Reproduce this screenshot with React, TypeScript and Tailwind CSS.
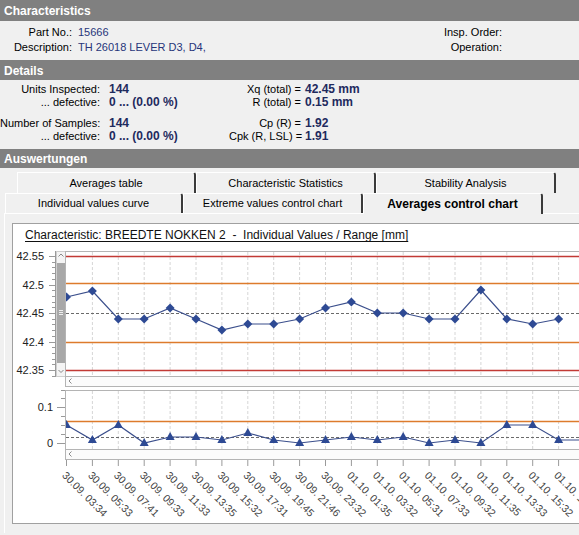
import React from 'react'

// x position of sample i in the charts (page coordinates)
const px = (i: number): number => 66.5 + 25.9 * i

// sample y positions, read straight off the plot
const indiv = [297, 291, 319, 319, 308, 319, 330, 324, 324, 319, 308, 302, 313, 313, 319, 319, 290, 319, 324, 319]
const range = [425, 440, 425, 443, 437, 437, 440, 433, 440, 443, 440, 437, 440, 437, 443, 440, 443, 425, 425, 440, 440]

const dates = [
  '30.09. 03:34',
  '30.09. 05:33',
  '30.09. 07:41',
  '30.09. 09:33',
  '30.09. 11:33',
  '30.09. 13:35',
  '30.09. 15:32',
  '30.09. 17:31',
  '30.09. 19:45',
  '30.09. 21:46',
  '30.09. 23:32',
  '01.10. 01:35',
  '01.10. 03:32',
  '01.10. 05:31',
  '01.10. 07:33',
  '01.10. 09:32',
  '01.10. 11:35',
  '01.10. 13:33',
  '01.10. 15:32',
  '01.10. 17:31',
]

const RED = '#c23a35'
const ORANGE = '#dd7b2c'
const NAVY = '#2e4a94'
const FRAME = '#b4b4b4'
const GRID = '#d6d6d6'

function SectionHeader({ title, h }: { title: string; h: string }): React.JSX.Element {
  return (
    <div className={`${h} bg-[#808080] text-white font-bold text-[12px] pl-[4px] pt-[1px] flex items-center`}>
      {title}
    </div>
  )
}

function Tab({ label, w, active }: { label: string; w: string; active?: boolean }): React.JSX.Element {
  return (
    <div
      className={`${w} shrink-0 flex items-center justify-center border-t border-l border-white border-r-2 border-r-[#3a3a3a] rounded-tr-[3px] ${
        active ? 'relative z-10 h-[21px] bg-[#f0f0f0] font-bold text-[12px]' : 'h-full'
      }`}
    >
      {label}
    </div>
  )
}

function Chart(): React.JSX.Element {
  const upTicks: number[] = []
  for (let k = -1; k <= 21; k++) upTicks.push(k)
  const lowTicks = [390, 398, 407, 416, 425, 434, 443]

  return (
    <svg width={566} height={279} viewBox="13 244 566 279" className="block">
      <defs>
        <clipPath id="up">
          <rect x={66} y={251} width={520} height={126} />
        </clipPath>
        <clipPath id="low">
          <rect x={66} y={390} width={520} height={60} />
        </clipPath>
      </defs>

      {/* ---------- individual values ---------- */}
      <g fontSize={11} fill="#222" textAnchor="end">
        {['42.55', '42.5', '42.45', '42.4', '42.35'].map((t, k) => (
          <text key={t} x={44} y={256 + k * 28.5 + 4}>
            {t}
          </text>
        ))}
      </g>
      <line x1={55.5} y1={251} x2={55.5} y2={377} stroke="#9a9a9a" />
      {upTicks.map((k) => {
        const y = Math.round(370 - k * 5.7) + 0.5
        if (y < 251 || y > 377) return null
        return <line key={k} x1={k % 5 === 0 ? 49 : 52} y1={y} x2={55} y2={y} stroke="#9a9a9a" />
      })}
      {/* vertical scroll bar */}
      <rect x={56.5} y={251.5} width={9} height={125} fill="#f4f4f4" stroke="#cfcfcf" />
      <rect x={57} y={263} width={8} height={100} fill="#a8a8a8" />
      {[310.5, 312.5, 314.5].map((y) => (
        <line key={y} x1={59} y1={y} x2={63} y2={y} stroke="#eeeeee" />
      ))}
      <path d="M58.5 256.5 L61 254 L63.5 256.5" fill="none" stroke="#8a8a8a" />
      <path d="M58.5 370 L61 372.5 L63.5 370" fill="none" stroke="#8a8a8a" />

      <rect x={65.5} y={251.5} width={520} height={125} fill="white" stroke={FRAME} />
      <rect x={65.5} y={376.5} width={520} height={10} fill="#fbfbfb" stroke={FRAME} />
      <path d="M71.5 378.5 L69 381 L71.5 383.5" fill="none" stroke="#8a8a8a" />
      {indiv.map((_, i) =>
        i === 0 ? null : (
          <line key={i} x1={px(i)} y1={252} x2={px(i)} y2={376} stroke={GRID} strokeDasharray="3 2" />
        ),
      )}
      <line x1={66} y1={256.5} x2={579} y2={256.5} stroke={RED} strokeWidth={1.3} />
      <line x1={66} y1={370.5} x2={579} y2={370.5} stroke={RED} strokeWidth={1.3} />
      <line x1={66} y1={283.5} x2={579} y2={283.5} stroke={ORANGE} strokeWidth={1.3} />
      <line x1={66} y1={342.5} x2={579} y2={342.5} stroke={ORANGE} strokeWidth={1.3} />
      <line x1={66} y1={313.5} x2={579} y2={313.5} stroke="#6a6a6a" strokeDasharray="3 2" />
      <g clipPath="url(#up)">
        <polyline points={indiv.map((y, i) => `${px(i)},${y}`).join(' ')} fill="none" stroke="#3b4f8c" strokeWidth={1.2} />
        {indiv.map((y, i) => (
          <path key={i} d={`M${px(i)} ${y - 4.5} L${px(i) + 4.5} ${y} L${px(i)} ${y + 4.5} L${px(i) - 4.5} ${y} Z`} fill={NAVY} />
        ))}
      </g>

      {/* ---------- range ---------- */}
      <g fontSize={11} fill="#222" textAnchor="end">
        <text x={53} y={411}>
          0.1
        </text>
        <text x={53} y={447}>
          0
        </text>
      </g>
      {lowTicks.map((y) => (
        <line key={y} x1={y === 407 || y === 443 ? 57 : 61} y1={y + 0.5} x2={65} y2={y + 0.5} stroke="#9a9a9a" />
      ))}
      <rect x={65.5} y={390.5} width={520} height={59} fill="white" stroke={FRAME} />
      <rect x={65.5} y={449.5} width={520} height={10} fill="#fbfbfb" stroke={FRAME} />
      <path d="M71.5 451.5 L69 454 L71.5 456.5" fill="none" stroke="#8a8a8a" />
      {range.map((_, i) =>
        i === 0 ? null : (
          <line key={i} x1={px(i)} y1={391} x2={px(i)} y2={449} stroke={GRID} strokeDasharray="3 2" />
        ),
      )}
      <line x1={66} y1={421.5} x2={579} y2={421.5} stroke={ORANGE} strokeWidth={1.3} />
      <line x1={66} y1={437.5} x2={579} y2={437.5} stroke="#6a6a6a" strokeDasharray="3 2" />
      <g clipPath="url(#low)">
        <polyline points={range.map((y, i) => `${px(i)},${y}`).join(' ')} fill="none" stroke="#3b4f8c" strokeWidth={1.2} />
        {range.map((y, i) => (
          <path key={i} d={`M${px(i)} ${y - 5} L${px(i) + 4.5} ${y + 3} L${px(i) - 4.5} ${y + 3} Z`} fill={NAVY} />
        ))}
      </g>
      {dates.map((d, i) => (
        <g key={d}>
          <line x1={px(i)} y1={460} x2={px(i)} y2={466} stroke="#9a9a9a" />
          <text x={px(i) - 5} y={476} fontSize={10.5} fill="#444" transform={`rotate(45 ${px(i) - 5} 476)`}>
            {d}
          </text>
        </g>
      ))}
    </svg>
  )
}

export default function App(): React.JSX.Element {
  return (
    <div className="w-[579px] h-[535px] overflow-hidden bg-[#f0f0f0] text-[11px] text-black font-['Liberation_Sans',Arial,sans-serif]">
      <SectionHeader title="Characteristics" h="h-[21px]" />
      <div className="h-[39px] pt-[4px] flex leading-[15px]">
        <div className="w-[72px] text-right whitespace-nowrap">
          <div>Part No.:</div>
          <div>Description:</div>
        </div>
        <div className="ml-[6px] w-[300px] text-[#27357a] whitespace-nowrap">
          <div>15666</div>
          <div>TH 26018 LEVER D3, D4,</div>
        </div>
        <div className="w-[124px] text-right whitespace-nowrap">
          <div>Insp. Order:</div>
          <div>Operation:</div>
        </div>
      </div>

      <SectionHeader title="Details" h="h-[20px]" />
      <div className="h-[69px] pt-[3px] leading-[13px]">
        {[
          [
            ['Units Inspected:', '144', 'Xq (total) =', '42.45 mm'],
            ['... defective:', '0 ... (0.00 %)', 'R (total) =', '0.15 mm'],
          ],
          [
            ['Number of Samples:', '144', 'Cp (R) =', '1.92'],
            ['... defective:', '0 ... (0.00 %)', 'Cpk (R, LSL) =', '1.91'],
          ],
        ].map((group, g) => (
          <div key={g} className={g ? 'mt-[8px]' : ''}>
            {group.map(([l1, v1, l2, v2]) => (
              <div key={l1 + l2} className="flex h-[13px] whitespace-nowrap">
                <span className="w-[100px] shrink-0 text-right">{l1}</span>
                <span className="ml-[9px] w-[120px] shrink-0 font-bold text-[12px] text-[#1e2a5e]">{v1}</span>
                <span className="w-[72px] shrink-0 text-right">{l2}</span>
                <span className="ml-[4px] font-bold text-[12px] text-[#1e2a5e]">{v2}</span>
              </div>
            ))}
          </div>
        ))}
      </div>

      <SectionHeader title="Auswertungen" h="h-[19px]" />
      <div className="h-[45px] pt-[4px]">
        <div className="h-[21px] pl-[17px] flex">
          <Tab label="Averages table" w="w-[179px]" />
          <Tab label="Characteristic Statistics" w="w-[180px]" />
          <Tab label="Stability Analysis" w="w-[180px]" />
        </div>
        <div className="h-[20px] pl-[5px] flex items-start">
          <Tab label="Individual values curve" w="w-[178px]" />
          <Tab label="Extreme values control chart" w="w-[180px]" />
          <Tab label="Averages control chart" w="w-[180px]" active />
        </div>
      </div>
      <div className="ml-[4px] h-[320px] border-l border-t border-white pt-[9px] pl-[7px]">
        <div className="w-[600px] h-[301px] bg-white border border-[#a0a0a0]">
          <div className="h-[20px] pt-[4px] pl-[12px] leading-[14px] text-[12px] text-[#111]">
            <span className="underline underline-offset-2 whitespace-pre">
              Characteristic: BREEDTE NOKKEN 2  -  Individual Values / Range [mm]
            </span>
          </div>
          <Chart />
        </div>
      </div>
    </div>
  )
}
